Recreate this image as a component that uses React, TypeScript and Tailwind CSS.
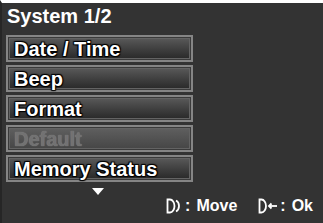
import React from 'react';

const items = [
  { label: 'Date / Time', disabled: false },
  { label: 'Beep', disabled: false },
  { label: 'Format', disabled: false },
  { label: 'Default', disabled: true },
  { label: 'Memory Status', disabled: false },
];

function MenuButton({ label, disabled }: { label: string; disabled: boolean }) {
  return (
    <div className="h-[27px] w-[187px] border-2 border-[#858585] bg-[#3a3a3a] p-px">
      <div
        className={`flex h-full items-center border border-[#636363] pl-[4px] ${
          disabled
            ? 'bg-gradient-to-b from-[#5e5e5e] to-[#474747]'
            : 'bg-gradient-to-b from-[#575757] to-[#2b2b2b]'
        }`}
      >
        <span
          className={`text-[20px] leading-none font-bold ${
            disabled
              ? 'text-[#727272] [text-shadow:0_0_1px_#909090]'
              : 'text-white [text-shadow:-1px_-1px_1px_#000,1px_-1px_1px_#000,-1px_1px_1px_#000,1px_1px_1px_#000]'
          }`}
        >
          {label}
        </span>
      </div>
    </div>
  );
}

function MoveIcon() {
  return (
    <svg width="16" height="16" viewBox="0 0 16 16" fill="none" stroke="white" strokeWidth="1.8">
      <path d="M1.5 1.5 H4 A4.5 6.5 0 0 1 4 14.5 H1.5 Z" />
      <path d="M10 2.5 A5 6 0 0 1 10 13.5" />
    </svg>
  );
}

function OkIcon() {
  return (
    <svg width="21" height="16" viewBox="0 0 21 16" fill="none" stroke="white" strokeWidth="1.8">
      <path d="M1.5 1.5 H3.5 A4.5 6.5 0 0 1 3.5 14.5 H1.5 Z" />
      <path d="M11 8 H19" />
      <path d="M13.5 5.5 L11 8 L13.5 10.5" />
    </svg>
  );
}

export default function App() {
  return (
    <div
      className="flex h-[223px] w-[323px] flex-col overflow-hidden border-t-[3px] border-l-2 border-t-white border-l-[#262626] bg-[#333333]"
      style={{ fontFamily: '"Liberation Sans", Arial, sans-serif' }}
    >
      {/* Title */}
      <div className="h-[32px] pl-[5px] pt-[3px] text-[20px] leading-none font-bold text-white">
        System 1/2
      </div>

      {/* Menu list */}
      <div className="flex flex-col gap-[3px] pl-[4px]">
        {items.map((it) => (
          <MenuButton key={it.label} label={it.label} disabled={it.disabled} />
        ))}
      </div>

      {/* Scroll indicator */}
      <div className="ml-[90px] mt-[6px] h-0 w-0 border-x-[6px] border-t-[7px] border-x-transparent border-t-white" />

      {/* Footer hints */}
      <div className="mt-[3px] flex items-center justify-end pr-[10px] text-[16px] leading-none font-bold text-white">
        <MoveIcon />
        <span className="ml-[3px]">:</span>
        <span className="ml-[6px]">Move</span>
        <span className="ml-[21px] flex items-center">
          <OkIcon />
        </span>
        <span className="ml-[1px]">:</span>
        <span className="ml-[6px]">Ok</span>
      </div>
    </div>
  );
}
